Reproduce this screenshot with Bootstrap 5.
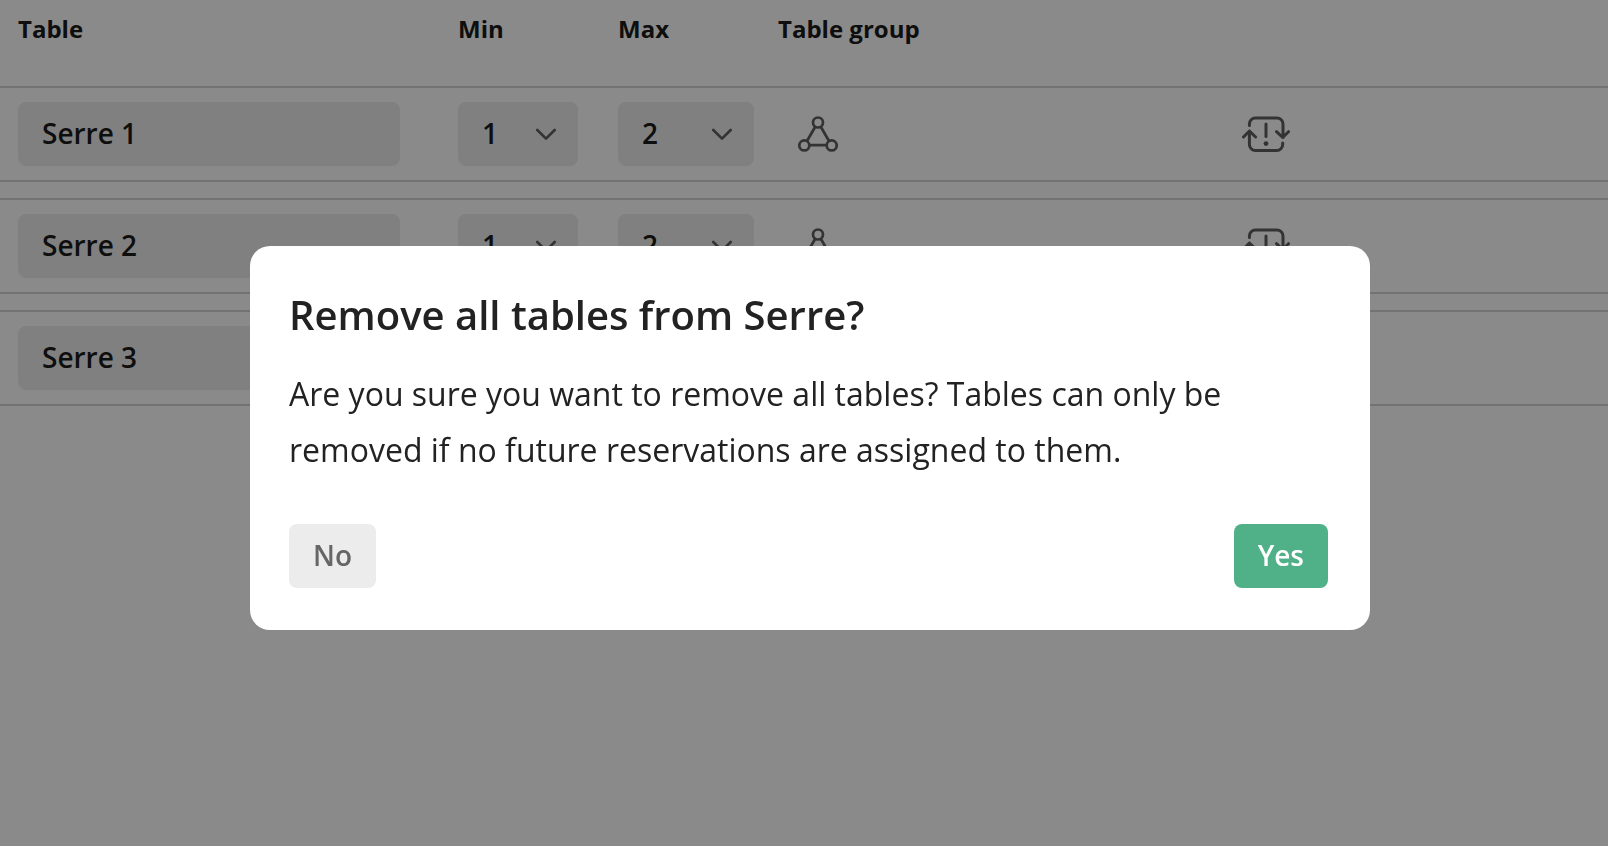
<!DOCTYPE html>
<html lang="en">
<head>
<meta charset="utf-8">
<meta name="viewport" content="width=device-width, initial-scale=1">
<title>Tables</title>
<link rel="stylesheet" href="https://cdn.jsdelivr.net/npm/bootstrap@5.3.0/dist/css/bootstrap.min.css">
<style>
  :root { --ink: #1a1a1a; --fill: #ececec; --line: #d5d5d5; --muted: #5e5e5e; }
  body { font-family: "Open Sans", sans-serif; color: var(--ink); background: #fff; overflow: hidden; }

  .seat-table { width: 100%; table-layout: fixed; border-collapse: separate; border-spacing: 0 16px; }
  .seat-table th { height: 54px; padding: 0; vertical-align: top; font-size: 24px; line-height: 26px; font-weight: 700; }
  .seat-table td { padding: 14px 0; border: solid var(--line); border-width: 2px 0; vertical-align: middle; }
  .seat-table th:first-child, .seat-table td:first-child { padding-left: 18px; }
  .col-name { width: 458px; }
  .col-size { width: 160px; }
  .col-swap { width: 366px; }

  .seat-field { height: 64px; padding: 0 24px 2px; border: 0; border-radius: 8px; background-color: var(--fill);
    color: var(--ink); font-size: 28px; line-height: 40px; font-weight: 600; }
  .seat-name { width: 382px; }
  .seat-min { width: 120px; }
  .seat-max { width: 136px; }
  .seat-select { background-size: 20px 12px; background-position: right 22px center;
    background-image: url("data:image/svg+xml,%3csvg xmlns='http://www.w3.org/2000/svg' viewBox='0 0 20 12'%3e%3cpath fill='none' stroke='%235e5e5e' stroke-width='2.6' stroke-linecap='round' stroke-linejoin='round' d='M1.300 2 10 10.600l8.700-8.600'/%3e%3c/svg%3e"); }
  .icon-btn { color: var(--muted); }
  .group-btn { margin-left: 20px; }

  .modal-backdrop { --bs-backdrop-opacity: .46; }
  .modal { padding-left: 12px; }
  .confirm-dialog { max-width: 1120px; margin-top: 246px; }
  .confirm-box { border: 0; border-radius: 20px; padding: 41px 42px 42px 39px; color: #222; }
  .confirm-title { font-size: 40px; line-height: 56px; font-weight: 600; }
  .confirm-text { font-size: 32px; line-height: 56px; margin: 23px 0 46px; }
  .confirm-btn { height: 64px; padding: 0 24px 2px; border: 0; border-radius: 8px; font-size: 28px; line-height: 40px; font-weight: 600; }
  .btn-no { --bs-btn-bg: #ececec; --bs-btn-color: #666; }
  .btn-yes { --bs-btn-bg: #50b088; --bs-btn-color: #fff; }
</style>
</head>
<body>

<svg class="d-none" aria-hidden="true">
  <symbol id="i-group" viewBox="0 0 40 36">
    <g fill="none" stroke="currentColor" stroke-width="2.700">
      <circle cx="20" cy="6.500" r="5"/><circle cx="6.300" cy="29.400" r="5"/><circle cx="33.700" cy="29.400" r="5"/>
      <path d="M17.200 10.800 9 25M22.800 10.800 31 25M11.400 29.200h17.200"/>
    </g>
  </symbol>
  <symbol id="i-swap" viewBox="0 0 48 36">
    <g fill="none" stroke="currentColor" stroke-width="3" stroke-linecap="round" stroke-linejoin="round">
      <path d="M7.400 9.500V8a6 6 0 0 1 6-6H35a6 6 0 0 1 6 6v13.500M34.500 15.700l6.200 5.800 5.800-5.800"/>
      <path d="M40.700 27v1.500a6 6 0 0 1-6 6H13.400a6 6 0 0 1-6-6V15M1.500 21l5.900-6 6.200 6"/>
      <path d="M24 8v12.500"/>
    </g>
    <circle cx="24" cy="27.600" r="2.400" fill="currentColor"/>
  </symbol>
</svg>

<main>
  <table class="seat-table">
    <colgroup><col class="col-name"><col class="col-size"><col class="col-size"><col><col class="col-swap"></colgroup>
    <thead>
      <tr><th scope="col">Table</th><th scope="col">Min</th><th scope="col">Max</th><th scope="col">Table group</th><th></th></tr>
    </thead>
    <tbody>
      <tr>
        <td><input class="form-control seat-field seat-name" type="text" value="Serre 1" aria-label="Table name"></td>
        <td><select class="form-select seat-field seat-select seat-min" aria-label="Min"><option selected>1</option><option>2</option></select></td>
        <td><select class="form-select seat-field seat-select seat-max" aria-label="Max"><option>1</option><option selected>2</option></select></td>
        <td><button type="button" class="btn p-0 border-0 d-block icon-btn group-btn" aria-label="Table group"><svg class="d-block" width="40" height="36"><use href="#i-group"/></svg></button></td>
        <td><button type="button" class="btn p-0 border-0 d-block icon-btn" aria-label="Swap"><svg class="d-block" width="48" height="36"><use href="#i-swap"/></svg></button></td>
      </tr>
      <tr>
        <td><input class="form-control seat-field seat-name" type="text" value="Serre 2" aria-label="Table name"></td>
        <td><select class="form-select seat-field seat-select seat-min" aria-label="Min"><option selected>1</option><option>2</option></select></td>
        <td><select class="form-select seat-field seat-select seat-max" aria-label="Max"><option>1</option><option selected>2</option></select></td>
        <td><button type="button" class="btn p-0 border-0 d-block icon-btn group-btn" aria-label="Table group"><svg class="d-block" width="40" height="36"><use href="#i-group"/></svg></button></td>
        <td><button type="button" class="btn p-0 border-0 d-block icon-btn" aria-label="Swap"><svg class="d-block" width="48" height="36"><use href="#i-swap"/></svg></button></td>
      </tr>
      <tr>
        <td><input class="form-control seat-field seat-name" type="text" value="Serre 3" aria-label="Table name"></td>
        <td></td><td></td><td></td><td></td>
      </tr>
    </tbody>
  </table>
</main>

<div class="modal-backdrop show"></div>
<div class="modal show d-block" tabindex="-1" role="dialog" aria-modal="true" aria-labelledby="confirmTitle">
  <div class="modal-dialog confirm-dialog">
    <div class="modal-content confirm-box">
      <h1 class="confirm-title mb-0" id="confirmTitle">Remove all tables from Serre?</h1>
      <p class="confirm-text">Are you sure you want to remove all tables? Tables can only be removed if no future reservations are assigned to them.</p>
      <div class="d-flex justify-content-between">
        <button type="button" class="btn confirm-btn btn-no">No</button>
        <button type="button" class="btn confirm-btn btn-yes">Yes</button>
      </div>
    </div>
  </div>
</div>

<script src="https://cdn.jsdelivr.net/npm/bootstrap@5.3.0/dist/js/bootstrap.bundle.min.js"></script>
</body>
</html>
